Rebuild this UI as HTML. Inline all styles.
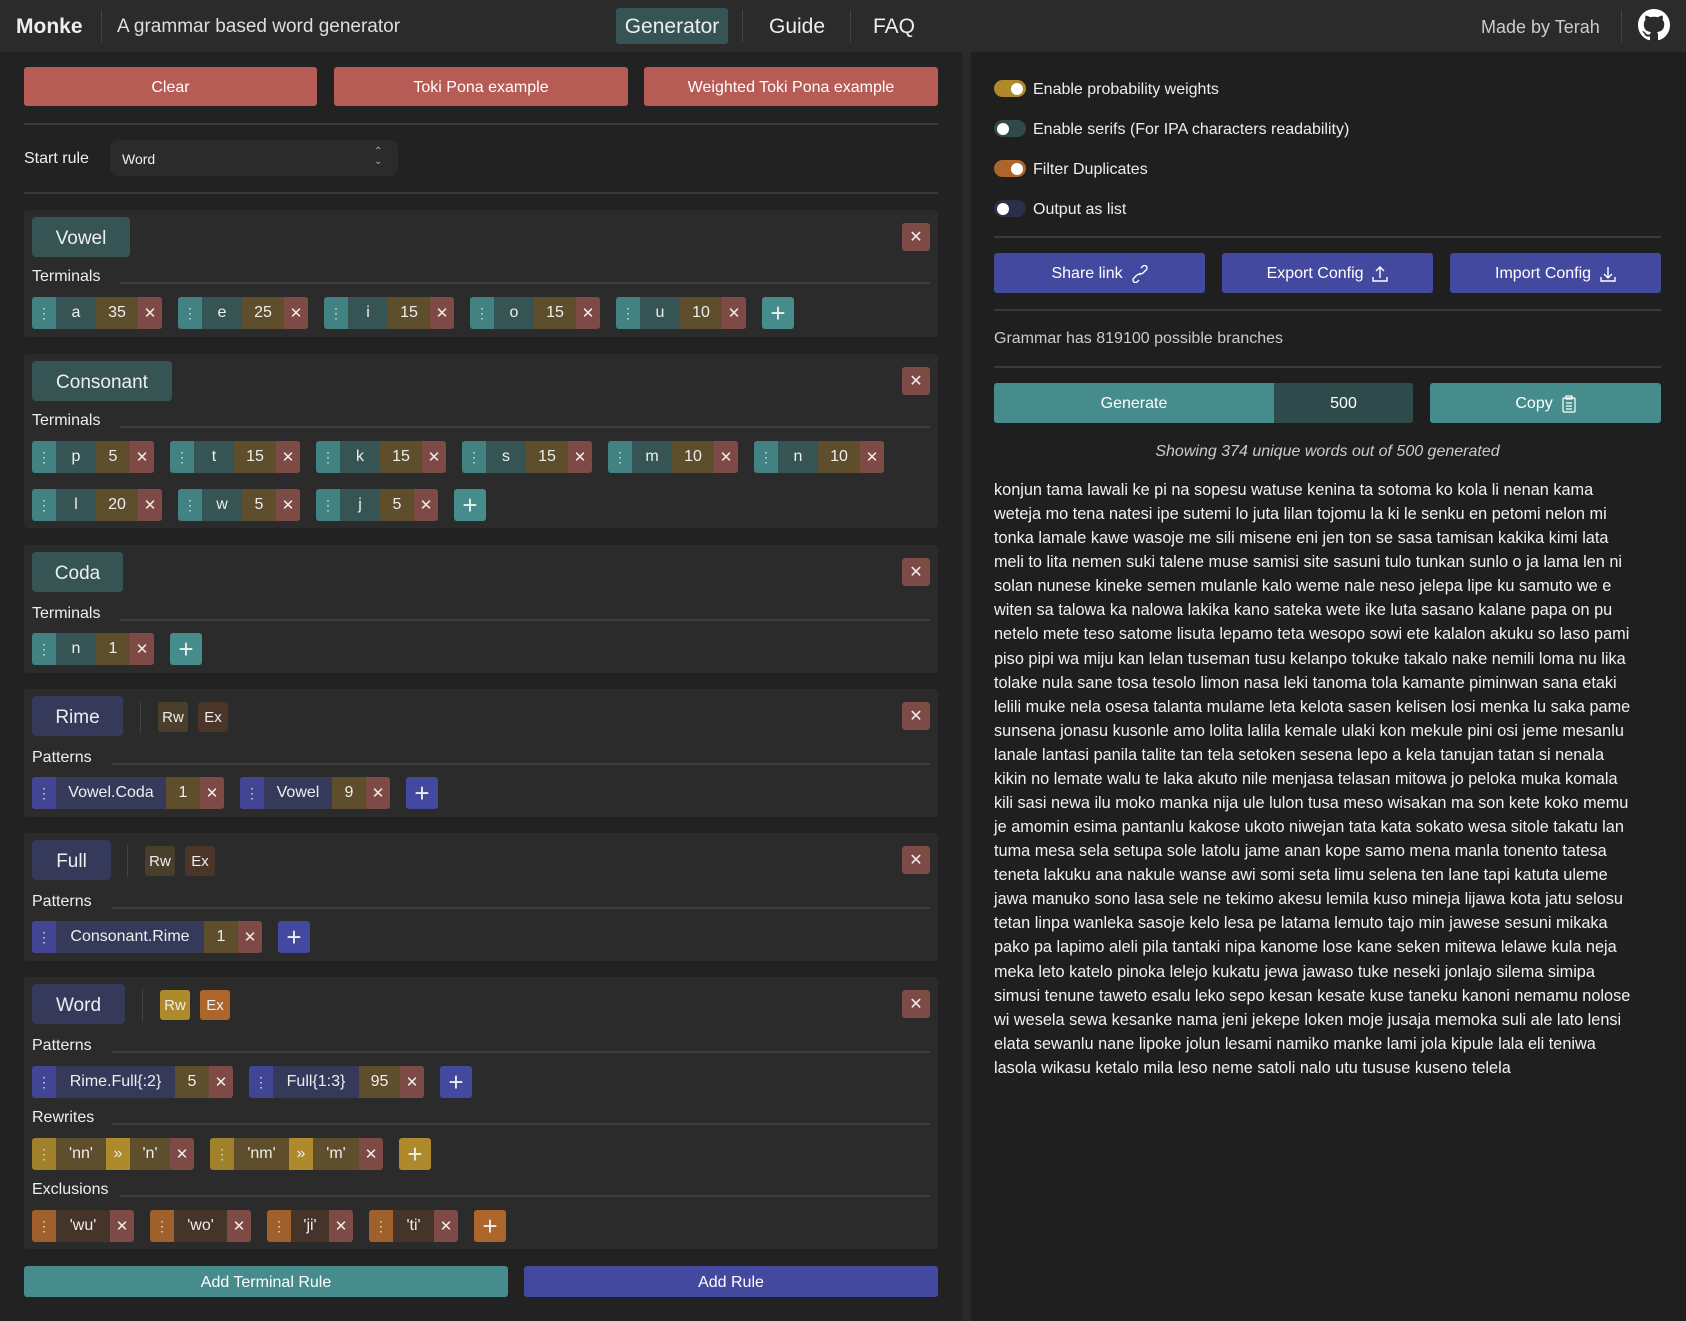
<!DOCTYPE html>
<html><head><meta charset="utf-8"><style>
*{box-sizing:border-box;margin:0;padding:0}
body{width:1686px;height:1321px;background:#222;font-family:"Liberation Sans",sans-serif;color:#eee;position:relative;overflow:hidden}
.a{position:absolute}
.hdr{left:0;top:0;width:1686px;height:52px;background:#2b2b2b}
.vd{position:absolute;width:1px;background:#444}
.btn{position:absolute;display:flex;align-items:center;justify-content:center;border-radius:3px;font-size:16px;color:#fff;padding-top:2px}
.hr{position:absolute;height:2px;background:#3a3a3a}
.card{position:absolute;left:24px;width:914px;background:#2b2b2b;border-radius:4px}
.title{position:absolute;left:8px;top:7px;height:40px;border-radius:4px;display:flex;align-items:center;justify-content:center;font-size:19px;padding-top:3px}
.tt{background:#365454}.ti{background:#353a5a}
.close{position:absolute;left:878px;top:13px;width:28px;height:28px;background:#7e4a46;border-radius:3px;display:flex;align-items:center;justify-content:center}
.lbl{position:absolute;left:8px;font-size:16px;height:20px;line-height:22px}
.ln{position:absolute;right:8px;height:2px;background:#3e3e3e}
.row{position:absolute;left:8px;display:flex;gap:16px}
.chip{display:flex;height:32px;border-radius:3px;overflow:hidden;font-size:16px}
.chip span{display:flex;align-items:center;justify-content:center;height:32px}
.h{width:24px;color:#cfd;font-size:14px;opacity:.9}
.x{width:24px;background:#7e4a46;font-size:15px}
.w{background:#5e4e2c}
.plus{width:32px;height:32px;border-radius:3px;display:flex;align-items:center;justify-content:center;font-size:26px;font-weight:300;line-height:1}
.T .h,.T.plus{background:#468c8c}.T .v{background:#365454}
.I .h,.I.plus{background:#4449a0}.I .v{background:#353a5a}
.G .h,.G.plus,.G .ar{background:#ae8a2c}.G .v{background:#5e4e2c}
.O .h,.O.plus{background:#ac662c}.O .v{background:#45342a}
.sm{position:absolute;top:13px;width:30px;height:30px;border-radius:3px;display:flex;align-items:center;justify-content:center;font-size:15px}
.tg{position:absolute;left:994px;width:32px;height:17px;border-radius:9px}
.tg i{position:absolute;top:2.5px;width:12px;height:12px;border-radius:6px;background:#fff}
.tl{position:absolute;left:1033px;font-size:16px;height:20px;line-height:22px}
.out{position:absolute;left:994px;top:478px;font-size:16.3px;line-height:24.08px;color:#f2f2f2;white-space:nowrap}
</style></head><body>
<div class="a hdr"></div>
<div class="a" style="left:16px;top:15px;font-size:21px;font-weight:bold">Monke</div>
<div class="vd" style="left:101px;top:10px;height:32px"></div>
<div class="a" style="left:117px;top:16px;font-size:19px;color:#ddd">A grammar based word generator</div>
<div class="a" style="left:616px;top:8px;width:112px;height:36px;background:#365454;border-radius:3px"></div>
<div class="a" style="left:616px;top:15px;width:112px;text-align:center;font-size:21px">Generator</div>
<div class="vd" style="left:742px;top:10px;height:32px"></div>
<div class="a" style="left:769px;top:15px;font-size:21px">Guide</div>
<div class="vd" style="left:850px;top:10px;height:32px"></div>
<div class="a" style="left:873px;top:15px;font-size:21px">FAQ</div>
<div class="a" style="left:1481px;top:17px;font-size:18px;color:#ccc">Made by Terah</div>
<div class="vd" style="left:1621px;top:10px;height:32px"></div>
<svg class="a" style="left:1638px;top:9px" width="32" height="32" viewBox="0 0 16 16"><path fill="#fff" d="M8 0C3.58 0 0 3.58 0 8c0 3.540 2.29 6.530 5.470 7.590.4.07.55-.17.55-.38 0-.19-.01-.82-.01-1.49-2.01.37-2.53-.49-2.69-.94-.09-.23-.48-.94-.82-1.13-.28-.15-.68-.52-.01-.53.63-.01 1.08.58 1.23.82.72 1.21 1.87.87 2.330.66.07-.52.28-.87.51-1.07-1.78-.2-3.64-.89-3.64-3.95 0-.87.31-1.59.82-2.15-.08-.2-.36-1.02.08-2.12 0 0 .67-.21 2.2.82.64-.18 1.32-.27 2-.27.68 0 1.36.09 2 .27 1.53-1.04 2.2-.82 2.2-.82.44 1.1.16 1.92.08 2.12.51.56.82 1.27.82 2.15 0 3.07-1.87 3.75-3.65 3.950.29.25.54.73.54 1.48 0 1.07-.01 1.93-.01 2.2 0 .21.15.46.55.38A8.013 8.013 0 0016 8c0-4.42-3.58-8-8-8z"/></svg>

<div class="a" style="left:962px;top:52px;width:9px;height:1269px;background:#2a2a2a"></div>
<div class="a" style="left:971px;top:52px;width:715px;height:1269px;background:#1f1f1f"></div>

<div class="btn" style="left:24px;top:67px;width:293px;height:39px;background:#b65c55">Clear</div>
<div class="btn" style="left:334px;top:67px;width:294px;height:39px;background:#b65c55">Toki Pona example</div>
<div class="btn" style="left:644px;top:67px;width:294px;height:39px;background:#b65c55">Weighted Toki Pona example</div>
<div class="hr" style="left:24px;top:123px;width:914px"></div>
<div class="a" style="left:24px;top:150px;font-size:16px">Start rule</div>
<div class="a" style="left:110px;top:140px;width:288px;height:36px;background:#2b2b2b;border-radius:8px"></div>
<div class="a" style="left:122px;top:151px;font-size:14px">Word</div>
<div class="a" style="left:374px;top:147px;font-size:10px;color:#aaa;line-height:10px">&#8963;<br>&#8964;</div>
<div class="hr" style="left:24px;top:192px;width:914px"></div>

<!-- Vowel -->
<div class="card" style="top:210px;height:127px">
<div class="title tt" style="width:98px">Vowel</div>
<div class="close">✕</div>
<div class="lbl" style="top:56px">Terminals</div><div class="ln" style="left:96px;top:72px"></div>
<div class="row" style="top:87px">
<div class="chip T"><span class="h">⋮</span><span class="v" style="width:40px">a</span><span class="w" style="width:42px">35</span><span class="x">✕</span></div>
<div class="chip T"><span class="h">⋮</span><span class="v" style="width:40px">e</span><span class="w" style="width:42px">25</span><span class="x">✕</span></div>
<div class="chip T"><span class="h">⋮</span><span class="v" style="width:40px">i</span><span class="w" style="width:42px">15</span><span class="x">✕</span></div>
<div class="chip T"><span class="h">⋮</span><span class="v" style="width:40px">o</span><span class="w" style="width:42px">15</span><span class="x">✕</span></div>
<div class="chip T"><span class="h">⋮</span><span class="v" style="width:40px">u</span><span class="w" style="width:42px">10</span><span class="x">✕</span></div>
<div class="plus T">+</div></div>
</div>

<!-- Consonant -->
<div class="card" style="top:354px;height:174px">
<div class="title tt" style="width:140px">Consonant</div>
<div class="close">✕</div>
<div class="lbl" style="top:56px">Terminals</div><div class="ln" style="left:96px;top:72px"></div>
<div class="row" style="top:87px">
<div class="chip T"><span class="h">⋮</span><span class="v" style="width:40px">p</span><span class="w" style="width:34px">5</span><span class="x">✕</span></div>
<div class="chip T"><span class="h">⋮</span><span class="v" style="width:40px">t</span><span class="w" style="width:42px">15</span><span class="x">✕</span></div>
<div class="chip T"><span class="h">⋮</span><span class="v" style="width:40px">k</span><span class="w" style="width:42px">15</span><span class="x">✕</span></div>
<div class="chip T"><span class="h">⋮</span><span class="v" style="width:40px">s</span><span class="w" style="width:42px">15</span><span class="x">✕</span></div>
<div class="chip T"><span class="h">⋮</span><span class="v" style="width:40px">m</span><span class="w" style="width:42px">10</span><span class="x">✕</span></div>
<div class="chip T"><span class="h">⋮</span><span class="v" style="width:40px">n</span><span class="w" style="width:42px">10</span><span class="x">✕</span></div>
</div>
<div class="row" style="top:135px">
<div class="chip T"><span class="h">⋮</span><span class="v" style="width:40px">l</span><span class="w" style="width:42px">20</span><span class="x">✕</span></div>
<div class="chip T"><span class="h">⋮</span><span class="v" style="width:40px">w</span><span class="w" style="width:34px">5</span><span class="x">✕</span></div>
<div class="chip T"><span class="h">⋮</span><span class="v" style="width:40px">j</span><span class="w" style="width:34px">5</span><span class="x">✕</span></div>
<div class="plus T">+</div></div>
</div>

<!-- Coda -->
<div class="card" style="top:545px;height:128px">
<div class="title tt" style="width:91px">Coda</div>
<div class="close">✕</div>
<div class="lbl" style="top:58px">Terminals</div><div class="ln" style="left:96px;top:74px"></div>
<div class="row" style="top:88px">
<div class="chip T"><span class="h">⋮</span><span class="v" style="width:40px">n</span><span class="w" style="width:34px">1</span><span class="x">✕</span></div>
<div class="plus T">+</div></div>
</div>

<!-- Rime -->
<div class="card" style="top:689px;height:128px">
<div class="title ti" style="width:91px">Rime</div>
<div class="vd" style="left:116px;top:12px;height:32px"></div>
<div class="sm" style="left:134px;background:#4a3f2a">Rw</div>
<div class="sm" style="left:174px;background:#4a3528">Ex</div>
<div class="close">✕</div>
<div class="lbl" style="top:58px">Patterns</div><div class="ln" style="left:88px;top:74px"></div>
<div class="row" style="top:88px">
<div class="chip I"><span class="h">⋮</span><span class="v" style="width:110px">Vowel.Coda</span><span class="w" style="width:34px">1</span><span class="x">✕</span></div>
<div class="chip I"><span class="h">⋮</span><span class="v" style="width:68px">Vowel</span><span class="w" style="width:34px">9</span><span class="x">✕</span></div>
<div class="plus I">+</div></div>
</div>

<!-- Full -->
<div class="card" style="top:833px;height:128px">
<div class="title ti" style="width:79px">Full</div>
<div class="vd" style="left:103px;top:12px;height:32px"></div>
<div class="sm" style="left:121px;background:#4a3f2a">Rw</div>
<div class="sm" style="left:161px;background:#4a3528">Ex</div>
<div class="close">✕</div>
<div class="lbl" style="top:58px">Patterns</div><div class="ln" style="left:88px;top:74px"></div>
<div class="row" style="top:88px">
<div class="chip I"><span class="h">⋮</span><span class="v" style="width:148px">Consonant.Rime</span><span class="w" style="width:34px">1</span><span class="x">✕</span></div>
<div class="plus I">+</div></div>
</div>

<!-- Word -->
<div class="card" style="top:977px;height:272px">
<div class="title ti" style="width:93px">Word</div>
<div class="vd" style="left:118px;top:12px;height:32px"></div>
<div class="sm" style="left:136px;background:#ae8a2c">Rw</div>
<div class="sm" style="left:176px;background:#ac662c">Ex</div>
<div class="close">✕</div>
<div class="lbl" style="top:58px">Patterns</div><div class="ln" style="left:88px;top:74px"></div>
<div class="row" style="top:89px">
<div class="chip I"><span class="h">⋮</span><span class="v" style="width:119px">Rime.Full{:2}</span><span class="w" style="width:34px">5</span><span class="x">✕</span></div>
<div class="chip I"><span class="h">⋮</span><span class="v" style="width:86px">Full{1:3}</span><span class="w" style="width:41px">95</span><span class="x">✕</span></div>
<div class="plus I">+</div></div>
<div class="lbl" style="top:130px">Rewrites</div><div class="ln" style="left:88px;top:146px"></div>
<div class="row" style="top:161px">
<div class="chip G"><span class="h">⋮</span><span class="v" style="width:50px">'nn'</span><span class="ar" style="width:24px">»</span><span class="v" style="width:40px">'n'</span><span class="x">✕</span></div>
<div class="chip G"><span class="h">⋮</span><span class="v" style="width:55px">'nm'</span><span class="ar" style="width:24px">»</span><span class="v" style="width:46px">'m'</span><span class="x">✕</span></div>
<div class="plus G">+</div></div>
<div class="lbl" style="top:202px">Exclusions</div><div class="ln" style="left:96px;top:218px"></div>
<div class="row" style="top:233px">
<div class="chip O"><span class="h">⋮</span><span class="v" style="width:54px">'wu'</span><span class="x">✕</span></div>
<div class="chip O"><span class="h">⋮</span><span class="v" style="width:53px">'wo'</span><span class="x">✕</span></div>
<div class="chip O"><span class="h">⋮</span><span class="v" style="width:38px">'ji'</span><span class="x">✕</span></div>
<div class="chip O"><span class="h">⋮</span><span class="v" style="width:41px">'ti'</span><span class="x">✕</span></div>
<div class="plus O">+</div></div>
</div>

<div class="btn" style="left:24px;top:1266px;width:484px;height:31px;background:#468c8c">Add Terminal Rule</div>
<div class="btn" style="left:524px;top:1266px;width:414px;height:31px;background:#43499e">Add Rule</div>

<!-- right -->
<div class="tg" style="top:80px;background:#ae8a2c"><i style="left:17px"></i></div>
<div class="tl" style="top:79px">Enable probability weights</div>
<div class="tg" style="top:120px;background:#2f4a48"><i style="left:3px"></i></div>
<div class="tl" style="top:119px">Enable serifs (For IPA characters readability)</div>
<div class="tg" style="top:160px;background:#ac662c"><i style="left:17px"></i></div>
<div class="tl" style="top:159px">Filter Duplicates</div>
<div class="tg" style="top:200px;background:#2c2e4a"><i style="left:3px"></i></div>
<div class="tl" style="top:199px">Output as list</div>
<div class="hr" style="left:994px;top:236px;width:667px"></div>
<div class="btn" style="left:994px;top:253px;width:211px;height:40px;background:#43499e">Share link&nbsp;&nbsp;<svg width="16" height="18" viewBox="0 0 16 18" fill="none" stroke="#fff" stroke-width="1.4"><path d="M9 3l2-2a2.5 2.5 0 013.5 3.5L11 8a2.5 2.5 0 01-3.5 0"/><path d="M7 15l-2 2a2.5 2.5 0 01-3.5-3.5L5 10a2.5 2.5 0 013.5 0"/></svg></div>
<div class="btn" style="left:1222px;top:253px;width:211px;height:40px;background:#43499e">Export Config&nbsp;&nbsp;<svg width="16" height="18" viewBox="0 0 16 18" fill="none" stroke="#fff" stroke-width="1.4"><path d="M8 13V2M4 6l4-4 4 4M1 12v4h14v-4"/></svg></div>
<div class="btn" style="left:1450px;top:253px;width:211px;height:40px;background:#43499e">Import Config&nbsp;&nbsp;<svg width="16" height="18" viewBox="0 0 16 18" fill="none" stroke="#fff" stroke-width="1.4"><path d="M8 2v11M4 9l4 4 4-4M1 12v4h14v-4"/></svg></div>
<div class="hr" style="left:994px;top:309px;width:667px"></div>
<div class="a" style="left:994px;top:330px;font-size:16px;color:#ccc">Grammar has 819100 possible branches</div>
<div class="hr" style="left:994px;top:366px;width:667px"></div>
<div class="btn" style="left:994px;top:383px;width:280px;height:40px;background:#468c8c;border-radius:3px 0 0 3px">Generate</div>
<div class="btn" style="left:1274px;top:383px;width:139px;height:40px;background:#2f4a4a;border-radius:0 3px 3px 0">500</div>
<div class="btn" style="left:1430px;top:383px;width:231px;height:40px;background:#468c8c">Copy&nbsp;&nbsp;<svg width="14" height="18" viewBox="0 0 14 18" fill="none" stroke="#fff" stroke-width="1.2"><rect x="1" y="3" width="12" height="14" rx="1"/><rect x="4" y="1" width="6" height="3"/><path d="M4 8h6M4 11h6M4 14h6"/></svg></div>
<div class="a" style="left:994px;top:443px;width:667px;text-align:center;font-size:16px;font-style:italic;color:#ccc">Showing 374 unique words out of 500 generated</div>
<div class="out">konjun tama lawali ke pi na sopesu watuse kenina ta sotoma ko kola li nenan kama<br>weteja mo tena natesi ipe sutemi lo juta lilan tojomu la ki le senku en petomi nelon mi<br>tonka lamale kawe wasoje me sili misene eni jen ton se sasa tamisan kakika kimi lata<br>meli to lita nemen suki talene muse samisi site sasuni tulo tunkan sunlo o ja lama len ni<br>solan nunese kineke semen mulanle kalo weme nale neso jelepa lipe ku samuto we e<br>witen sa talowa ka nalowa lakika kano sateka wete ike luta sasano kalane papa on pu<br>netelo mete teso satome lisuta lepamo teta wesopo sowi ete kalalon akuku so laso pami<br>piso pipi wa miju kan lelan tuseman tusu kelanpo tokuke takalo nake nemili loma nu lika<br>tolake nula sane tosa tesolo limon nasa leki tanoma tola kamante piminwan sana etaki<br>lelili muke nela osesa talanta mulame leta kelota sasen kelisen losi menka lu saka pame<br>sunsena jonasu kusonle amo lolita lalila kemale ulaki kon mekule pini osi jeme mesanlu<br>lanale lantasi panila talite tan tela setoken sesena lepo a kela tanujan tatan si nenala<br>kikin no lemate walu te laka akuto nile menjasa telasan mitowa jo peloka muka komala<br>kili sasi newa ilu moko manka nija ule lulon tusa meso wisakan ma son kete koko memu<br>je amomin esima pantanlu kakose ukoto niwejan tata kata sokato wesa sitole takatu lan<br>tuma mesa sela setupa sole latolu jame anan kope samo mena manla tonento tatesa<br>teneta lakuku ana nakule wanse awi somi seta limu selena ten lane tapi katuta uleme<br>jawa manuko sono lasa sele ne tekimo akesu lemila kuso mineja lijawa kota jatu selosu<br>tetan linpa wanleka sasoje kelo lesa pe latama lemuto tajo min jawese sesuni mikaka<br>pako pa lapimo aleli pila tantaki nipa kanome lose kane seken mitewa lelawe kula neja<br>meka leto katelo pinoka lelejo kukatu jewa jawaso tuke neseki jonlajo silema simipa<br>simusi tenune taweto esalu leko sepo kesan kesate kuse taneku kanoni nemamu nolose<br>wi wesela sewa kesanke nama jeni jekepe loken moje jusaja memoka suli ale lato lensi<br>elata sewanlu nane lipoke jolun lesami namiko manke lami jola kipule lala eli teniwa<br>lasola wikasu ketalo mila leso neme satoli nalo utu tususe kuseno telela</div>
</body></html>
